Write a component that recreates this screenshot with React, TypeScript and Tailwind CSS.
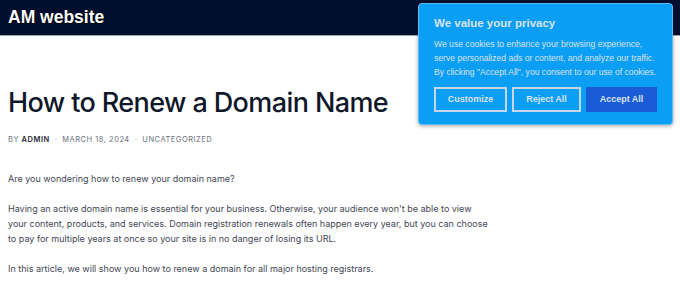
import React from 'react';

const paragraphs = [
  'Are you wondering how to renew your domain name?',
  "Having an active domain name is essential for your business. Otherwise, your audience won't be able to view your content, products, and services. Domain registration renewals often happen every year, but you can choose to pay for multiple years at once so your site is in no danger of losing its URL.",
  'In this article, we will show you how to renew a domain for all major hosting registrars.',
];

function CookieBanner() {
  return (
    <div className="absolute left-[418px] top-[3px] w-[255px] rounded-[4px] border border-[#5bbcf5] bg-[#0b9ef5] px-[15px] pt-[12px] pb-[12px] shadow-[0_1px_4px_rgba(0,0,0,0.35)] font-['Liberation_Sans',Arial,sans-serif]">
      <h2 className="text-[11.5px] font-bold leading-[14px] text-[#d9e3ec]">We value your privacy</h2>
      <p className="mt-[7px] text-[8.6px] leading-[14px] text-[#d9e3ec]">
        We use cookies to enhance your browsing experience, serve personalized ads or content, and analyze our traffic. By clicking "Accept All", you consent to our use of cookies.
      </p>
      <div className="mt-[8px] flex gap-[5px]">
        <button className="h-[25px] w-[74px] border-2 border-[#c6d6e6] text-[9px] font-bold text-[#d9e3ec]">Customize</button>
        <button className="h-[25px] w-[70px] border-2 border-[#c6d6e6] text-[9px] font-bold text-[#d9e3ec]">Reject All</button>
        <button className="h-[25px] w-[72px] bg-[#1a5bd8] text-[9px] font-bold text-[#d9e3ec]">Accept All</button>
      </div>
    </div>
  );
}

export default function App() {
  return (
    <div className="relative h-[286px] w-[680px] overflow-hidden bg-white">
      <header className="flex h-[36px] items-center border-b border-[#9ca3af] bg-[#000f2e] px-[8px]">
        <span className="text-[17.5px] font-bold text-white [text-shadow:0_0_1px_#000,0_1px_1px_#000] font-['Liberation_Sans',Arial,sans-serif]">
          AM website
        </span>
      </header>

      <main className="px-[8px] font-['Inter',sans-serif]">
        <h1 className="mt-[51px] text-[27px] font-medium leading-[32px] tracking-[-0.6px] text-[#0f172a]">
          How to Renew a Domain Name
        </h1>
        <div className="mt-[15px] flex items-center gap-[5px] text-[7.5px] uppercase tracking-[0.5px] text-[#6b7280]">
          <span>
            By <span className="font-semibold text-[#1f2937]">Admin</span>
          </span>
          <span className="text-[#b0b5bd]">·</span>
          <span>March 18, 2024</span>
          <span className="text-[#b0b5bd]">·</span>
          <span>Uncategorized</span>
        </div>
        <div className="mt-[26px] max-w-[482px] text-[9px] leading-[15px] text-[#3f4654]">
          {paragraphs.map((p) => (
            <p key={p} className="mb-[15px]">
              {p}
            </p>
          ))}
        </div>
      </main>

      <CookieBanner />
    </div>
  );
}
